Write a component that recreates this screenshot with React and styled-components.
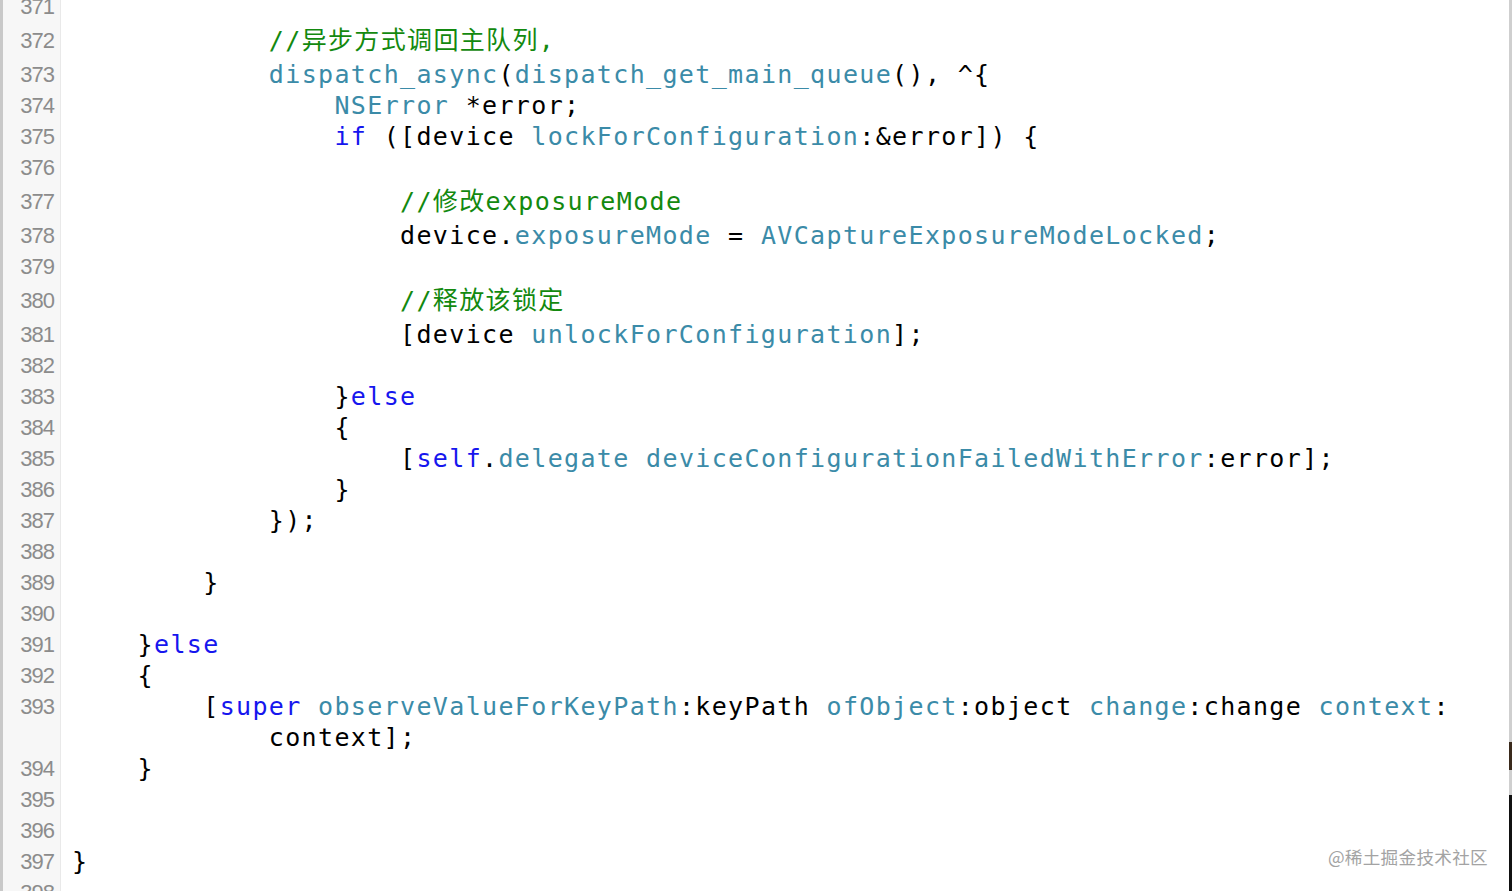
import React from 'react'
import styled, { createGlobalStyle } from 'styled-components'

const GlobalStyle = createGlobalStyle`
  html, body {
    margin: 0;
    padding: 0;
    background: #ffffff;
    overflow: hidden;
  }
`

const colors = {
  plain: '#000000',
  comment: '#13890f',
  keyword: '#1616ee',
  ident: '#3b8ba8',
}

const Page = styled.div`
  position: relative;
  display: flex;
  height: 891px;
  width: 1512px;
  overflow: hidden;
  background: #ffffff;
`

const Editor = styled.div`
  flex: 1;
  display: flex;
  flex-direction: column;
  margin-top: -9.5px;
`

const Row = styled.div`
  display: flex;
  height: ${(p) => (p.tall ? 37 : 31)}px;
  flex: none;
`

const Gutter = styled.div`
  flex: none;
  width: 51px;
  padding-right: 6px;
  background: #f7f7f7;
  border-left: 3px solid #c9c9c9;
  border-right: 1px solid #e9e9e9;
  font-family: 'Liberation Sans', Arial, sans-serif;
  font-size: 22px;
  letter-spacing: -1px;
  color: #8c8c8c;
  text-align: right;
  line-height: ${(p) => (p.tall ? 37 : 31)}px;
`

const Code = styled.div`
  flex: 1;
  padding-left: 11px;
  font-family: 'DejaVu Sans Mono', 'Noto Sans CJK SC', monospace;
  font-size: 25px;
  letter-spacing: 1.35px;
  white-space: pre;
  line-height: ${(p) => (p.tall ? 37 : 31)}px;
  color: ${colors.plain};
`

const Tok = styled.span`
  color: ${(p) => colors[p.kind] || colors.plain};
`

const ScrollEdge = styled.div`
  flex: none;
  width: 3px;
  background: linear-gradient(
    to bottom,
    #cfcfcf 0,
    #cfcfcf 742px,
    #3a2a1c 742px,
    #3a2a1c 770px,
    #cfcfcf 770px,
    #cfcfcf 795px,
    #111111 795px,
    #111111 100%
  );
`

const Watermark = styled.div`
  position: absolute;
  right: 24px;
  bottom: 22px;
  font-family: 'Noto Sans CJK SC', sans-serif;
  font-size: 17.6px;
  color: #a3a3a3;
  letter-spacing: 0.3px;
`

const ind = (n) => ' '.repeat(n)

// [lineNumber, tall, tokens]
const lines = [
  ['371', false, []],
  ['372', true, [['plain', ind(12)], ['comment', '//异步方式调回主队列,']]],
  ['373', false, [['plain', ind(12)], ['ident', 'dispatch_async'], ['plain', '('], ['ident', 'dispatch_get_main_queue'], ['plain', '(), ^{']]],
  ['374', false, [['plain', ind(16)], ['ident', 'NSError'], ['plain', ' *error;']]],
  ['375', false, [['plain', ind(16)], ['keyword', 'if'], ['plain', ' ([device '], ['ident', 'lockForConfiguration'], ['plain', ':&error]) {']]],
  ['376', false, []],
  ['377', true, [['plain', ind(20)], ['comment', '//修改exposureMode']]],
  ['378', false, [['plain', ind(20) + 'device.'], ['ident', 'exposureMode'], ['plain', ' = '], ['ident', 'AVCaptureExposureModeLocked'], ['plain', ';']]],
  ['379', false, []],
  ['380', true, [['plain', ind(20)], ['comment', '//释放该锁定']]],
  ['381', false, [['plain', ind(20) + '[device '], ['ident', 'unlockForConfiguration'], ['plain', '];']]],
  ['382', false, []],
  ['383', false, [['plain', ind(16) + '}'], ['keyword', 'else']]],
  ['384', false, [['plain', ind(16) + '{']]],
  ['385', false, [['plain', ind(20) + '['], ['keyword', 'self'], ['plain', '.'], ['ident', 'delegate'], ['plain', ' '], ['ident', 'deviceConfigurationFailedWithError'], ['plain', ':error];']]],
  ['386', false, [['plain', ind(16) + '}']]],
  ['387', false, [['plain', ind(12) + '});']]],
  ['388', false, []],
  ['389', false, [['plain', ind(8) + '}']]],
  ['390', false, []],
  ['391', false, [['plain', ind(4) + '}'], ['keyword', 'else']]],
  ['392', false, [['plain', ind(4) + '{']]],
  ['393', false, [['plain', ind(8) + '['], ['keyword', 'super'], ['plain', ' '], ['ident', 'observeValueForKeyPath'], ['plain', ':keyPath '], ['ident', 'ofObject'], ['plain', ':object '], ['ident', 'change'], ['plain', ':change '], ['ident', 'context'], ['plain', ':']]],
  ['', false, [['plain', ind(12) + 'context];']]],
  ['394', false, [['plain', ind(4) + '}']]],
  ['395', false, []],
  ['396', false, []],
  ['397', false, [['plain', '}']]],
  ['398', false, []],
]

export default function App() {
  return (
    <Page>
      <GlobalStyle />
      <Editor>
        {lines.map(([num, tall, tokens], i) => (
          <Row key={i} tall={tall}>
            <Gutter tall={tall}>{num}</Gutter>
            <Code tall={tall}>
              {tokens.map(([kind, text], j) => (
                <Tok key={j} kind={kind}>
                  {text}
                </Tok>
              ))}
            </Code>
          </Row>
        ))}
      </Editor>
      <ScrollEdge />
      <Watermark>@稀土掘金技术社区</Watermark>
    </Page>
  )
}
